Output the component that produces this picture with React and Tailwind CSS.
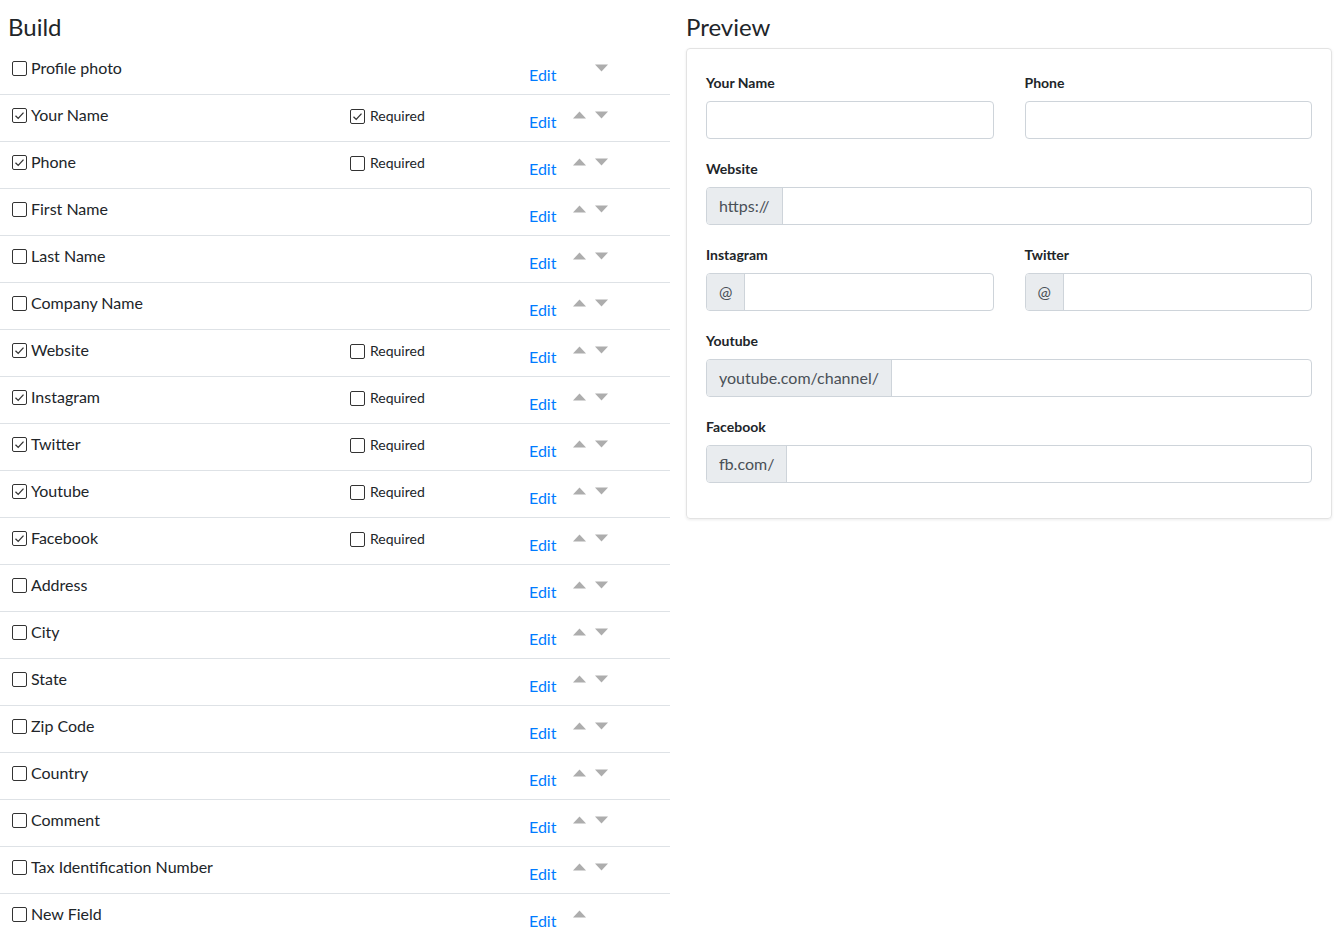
import React from "react";

const fields = [
  { label: "Profile photo", checked: false, required: null, up: false, down: true },
  { label: "Your Name", checked: true, required: true },
  { label: "Phone", checked: true, required: false },
  { label: "First Name", checked: false, required: null },
  { label: "Last Name", checked: false, required: null },
  { label: "Company Name", checked: false, required: null },
  { label: "Website", checked: true, required: false },
  { label: "Instagram", checked: true, required: false },
  { label: "Twitter", checked: true, required: false },
  { label: "Youtube", checked: true, required: false },
  { label: "Facebook", checked: true, required: false },
  { label: "Address", checked: false, required: null },
  { label: "City", checked: false, required: null },
  { label: "State", checked: false, required: null },
  { label: "Zip Code", checked: false, required: null },
  { label: "Country", checked: false, required: null },
  { label: "Comment", checked: false, required: null },
  { label: "Tax Identification Number", checked: false, required: null },
  { label: "New Field", checked: false, required: null, up: true, down: false },
];

const font = { fontFamily: "Lato, 'Open Sans', sans-serif" };

const Box = ({ checked }) => (
  <span className="inline-flex w-[15px] h-[15px] border border-[#333] rounded-[2px] bg-white items-center justify-center shrink-0">
    {checked && (
      <svg width="11" height="11" viewBox="0 0 11 11">
        <path d="M1.5 5.8 L4.2 8.4 L9.5 2.6" fill="none" stroke="#333" strokeWidth="1.3" />
      </svg>
    )}
  </span>
);

const Arrow = ({ dir }) => (
  <svg width="13" height="8" viewBox="0 0 13 8">
    {dir === "up" ? (
      <polygon points="6.5,0.5 13,7.5 0,7.5" fill="#adadad" />
    ) : (
      <polygon points="0,0.5 13,0.5 6.5,7.5" fill="#adadad" />
    )}
  </svg>
);

const BuildRow = ({ f, last }) => {
  const up = f.up !== undefined ? f.up : true;
  const down = f.down !== undefined ? f.down : true;
  return (
    <div className={`flex items-start h-[47px] ${last ? "" : "border-b border-[#dee2e6]"}`}>
      <label className="w-[350px] pl-3 pt-[8px] flex items-center gap-[4px] text-base leading-6 text-[#212529]">
        <Box checked={f.checked} />
        <span>{f.label}</span>
      </label>
      <div className="w-[179px] pt-[11px] h-full">
        {f.required !== null && (
          <span className="flex items-center gap-[5px] text-sm leading-5 text-[#212529]">
            <Box checked={f.required} />
            <span>Required</span>
          </span>
        )}
      </div>
      <a className="w-[44px] mt-[15px] text-base leading-6 text-[#007bff]">Edit</a>
      <div className="flex gap-[9px] pt-[16px]">
        <span className="w-[13px]">{up && <Arrow dir="up" />}</span>
        <span className="w-[13px]">{down && <Arrow dir="down" />}</span>
      </div>
    </div>
  );
};

const Field = ({ label, addon, className = "" }) => (
  <div className={`mb-5 ${className}`}>
    <div className="text-sm font-bold leading-5 text-[#212529] mb-[8px]">{label}</div>
    <div className="flex h-[38px] border border-[#ced4da] rounded-[4px] overflow-hidden bg-white">
      {addon && (
        <span className="flex items-center px-[12px] bg-[#e9ecef] border-r border-[#ced4da] text-base text-[#495057]">
          {addon}
        </span>
      )}
      <span className="flex-1" />
    </div>
  </div>
);

export default function App() {
  return (
    <div className="flex gap-4 bg-white min-h-screen" style={font}>
      {/* Build column */}
      <div className="w-[670px]">
        <h4 className="h-[48px] pl-2 pt-[11px] text-2xl leading-8 text-[#212529]">Build</h4>
        {fields.map((f, i) => (
          <BuildRow key={f.label} f={f} last={i === fields.length - 1} />
        ))}
      </div>

      {/* Preview column */}
      <div className="w-[646px]">
        <h4 className="h-[48px] pt-[11px] text-2xl leading-8 text-[#212529]">Preview</h4>
        <div className="border border-[#e3e3e3] rounded-[4px] shadow-[0_1px_3px_rgba(0,0,0,0.08)] px-[19px] pt-6 pb-[15px]">
          <div className="flex gap-[31px]">
            <Field label="Your Name" className="flex-1" />
            <Field label="Phone" className="flex-1" />
          </div>
          <Field label="Website" addon="https://" />
          <div className="flex gap-[31px]">
            <Field label="Instagram" addon="@" className="flex-1" />
            <Field label="Twitter" addon="@" className="flex-1" />
          </div>
          <Field label="Youtube" addon="youtube.com/channel/" />
          <Field label="Facebook" addon="fb.com/" />
        </div>
      </div>
    </div>
  );
}
